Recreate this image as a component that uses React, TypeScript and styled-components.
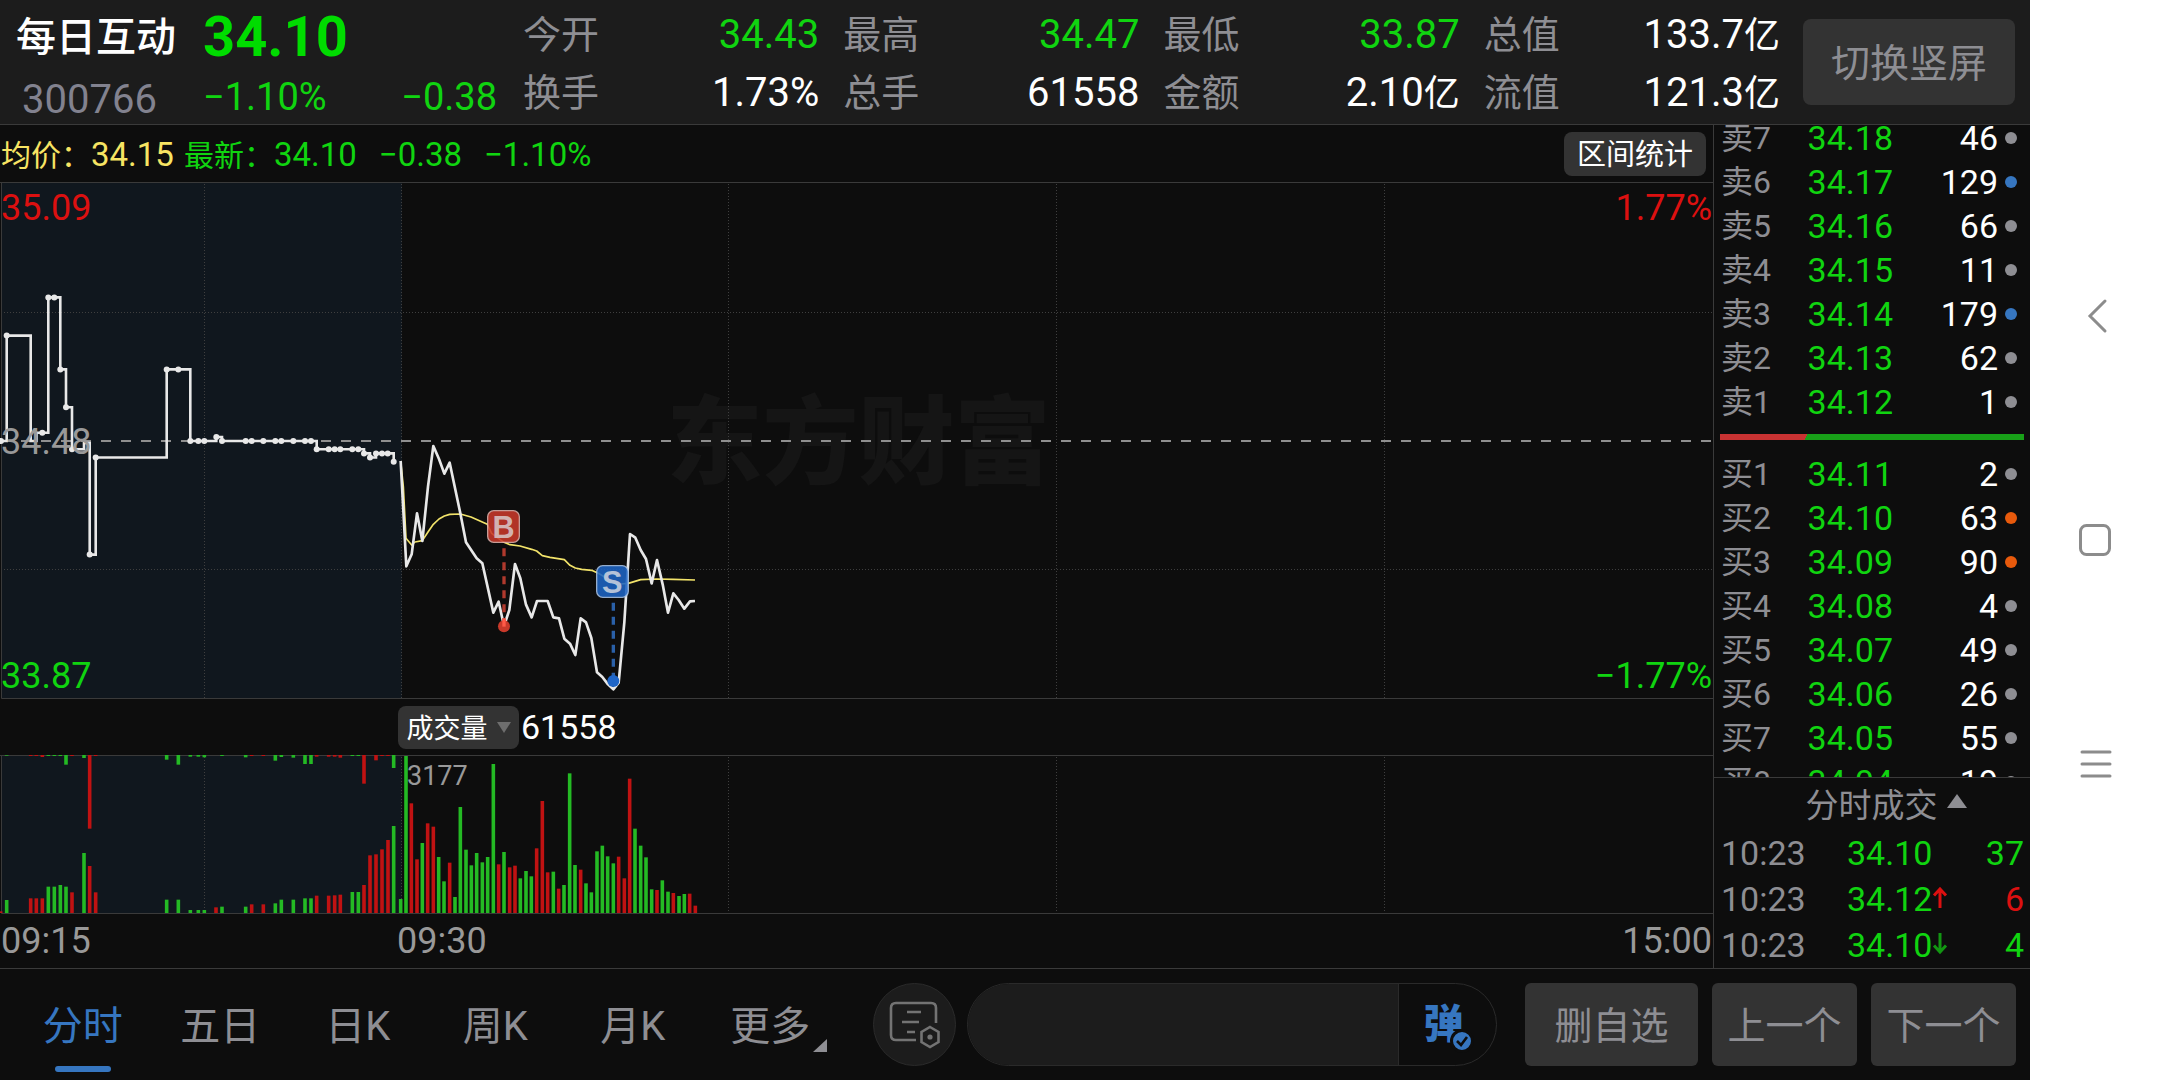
import React from "react";
import styled, { createGlobalStyle } from "styled-components";

const color = {
  page: "#0d0d0d",
  header: "#1c1c1c",
  line: "#3a3a3a",
  button: "#333333",
  muted: "#8e8e93",
  axis: "#999999",
  up: "#dc1010",
  down: "#10d410",
  downStrong: "#00dc00",
  avg: "#f7e463",
  blue: "#3676c0",
  white: "#ffffff",
};

type Tone = "up" | "down" | "white" | "muted";

const GlobalStyle = createGlobalStyle`
  *, *::before, *::after { box-sizing: border-box; }
  html, body, #root { height: 100%; }
  body {
    margin: 0;
    background: ${color.page};
    color: ${color.white};
    font-family: Roboto, "Noto Sans CJK SC", sans-serif;
    font-size: 34px;
    line-height: 1.2;
  }
  button, input { font: inherit; color: inherit; border: 0; margin: 0; padding: 0; background: none; }
  button { padding-top: 4px; white-space: nowrap; cursor: pointer; }
  table { border-collapse: collapse; }
`;

const Screen = styled.div`
  display: flex;
  min-height: 100vh;
`;

const Terminal = styled.main`
  display: flex;
  flex: 1;
  flex-direction: column;
  min-width: 0;
`;

/* ---------- header ---------- */

const Header = styled.header`
  display: flex;
  height: 125px;
  padding: 6px 15px 0 16px;
  background: ${color.header};
  border-bottom: 1px solid ${color.line};
`;

const Identity = styled.div`
  display: flex;
  flex-direction: column;
  justify-content: space-between;
  width: 187px;
`;

const StockName = styled.h1`
  margin: 0;
  font-size: 40px;
  font-weight: 500;
  line-height: 64px;
`;

const StockCode = styled.span`
  padding-left: 6px;
  color: #82828f;
  font-size: 40px;
  line-height: 48px;
`;

const Quote = styled.div`
  width: 294px;
  color: ${color.down};
`;

const LastPrice = styled.strong`
  display: block;
  color: ${color.downStrong};
  font-size: 56px;
  font-weight: 700;
  line-height: 62px;
`;

const QuoteChange = styled.div`
  display: flex;
  justify-content: space-between;
  font-size: 38px;
  line-height: 58px;
`;

const Stats = styled.dl`
  display: grid;
  flex: 1;
  grid-template-columns: repeat(4, 1fr);
  grid-auto-rows: 58px;
  column-gap: 24px;
  margin: 0 23px 0 26px;
`;

const Stat = styled.div`
  display: flex;
  align-items: center;
  justify-content: space-between;
  white-space: nowrap;
`;

const StatLabel = styled.dt`
  padding-top: 2px;
  color: ${color.muted};
  font-size: 38px;
`;

const StatValue = styled.dd<{ $tone: Tone }>`
  margin: 0;
  color: ${(p) => color[p.$tone]};
  font-size: 40px;
`;

const Unit = styled.span`
  font-size: 36px;
`;

const RotateButton = styled.button`
  width: 212px;
  height: 86px;
  margin-top: 13px;
  border-radius: 8px;
  background: ${color.button};
  color: ${color.muted};
  font-size: 39px;
`;

/* ---------- charts ---------- */

const Workspace = styled.div`
  display: flex;
  flex: 1;
`;

const Charts = styled.section`
  flex: 1;
  min-width: 0;
`;

const InfoBar = styled.div`
  display: flex;
  align-items: center;
  justify-content: space-between;
  height: 58px;
  padding-right: 7px;
  border-bottom: 1px solid ${color.line};
`;

const Legend = styled.div`
  display: flex;
  align-items: center;
  gap: 22px;
  padding: 3px 0 0 1px;
  white-space: nowrap;
`;

const LegendPair = styled.div`
  display: flex;
  gap: 10px;
`;

const LegendItem = styled.span<{ $avg?: boolean }>`
  display: flex;
  align-items: center;
  color: ${(p) => (p.$avg ? color.avg : color.down)};
  font-size: 33px;
`;

const LegendLabel = styled.span`
  padding-top: 2px;
  font-size: 30px;
`;

const RangeButton = styled.button`
  width: 142px;
  height: 44px;
  border-radius: 8px;
  background: ${color.button};
  font-size: 29px;
`;

const Plot = styled.div`
  position: relative;
  svg {
    position: relative;
    display: block;
    width: 100%;
    overflow: visible;
  }
`;

const Watermark = styled.div`
  position: absolute;
  inset: 0;
  display: flex;
  align-items: center;
  justify-content: center;
  padding: 0 0 12px 4px;
  color: #151515;
  font-family: "Noto Sans CJK SC", sans-serif;
  font-size: 96px;
  font-weight: 900;
`;

const Scale = styled.div<{ $right?: boolean }>`
  position: absolute;
  top: 4px;
  bottom: 2px;
  left: ${(p) => (p.$right ? "auto" : "1px")};
  right: ${(p) => (p.$right ? "1px" : "auto")};
  display: flex;
  flex-direction: column;
  justify-content: space-between;
  font-size: 36px;
  line-height: 42px;
  text-align: right;
`;

const ScaleMark = styled.span<{ $color: string }>`
  color: ${(p) => p.$color};
`;

const VolumeBar = styled.div`
  display: flex;
  align-items: center;
  gap: 2px;
  height: 57px;
  padding-left: 398px;
  border-bottom: 1px solid ${color.line};
`;

const IndicatorButton = styled.button`
  display: flex;
  align-items: center;
  justify-content: center;
  gap: 9px;
  width: 121px;
  height: 43px;
  border-radius: 8px;
  background: ${color.button};
  font-size: 27px;
  svg { margin-bottom: 4px; }
`;

const VolumePeak = styled.span`
  position: absolute;
  top: 2px;
  left: 407px;
  color: ${color.axis};
  font-size: 27px;
  line-height: 36px;
`;

const TimeAxis = styled.div`
  display: flex;
  align-items: center;
  height: 54px;
  padding: 2px 1px 0;
  color: ${color.axis};
  font-size: 36px;
  span:nth-child(1) { width: 396px; }
  span:nth-child(2) { flex: 1; }
`;

/* ---------- order book ---------- */

const Side = styled.aside`
  display: flex;
  flex-direction: column;
  width: 317px;
  border-left: 1px solid ${color.line};
`;

const Book = styled.div`
  flex: 1;
  contain: size;
  overflow: hidden;
`;

const BookScroll = styled.div`
  margin-top: -9px;
`;

const Levels = styled.table`
  width: 100%;
  table-layout: fixed;
  td, th {
    height: 44px;
    padding: 0;
    line-height: 44px;
    text-align: right;
    font-weight: 400;
  }
`;

const LevelName = styled.th`
  width: 70px;
  color: ${color.muted};
  font-size: 32px;
  && { padding-left: 7px; text-align: left; }
`;

const LevelPrice = styled.td`
  width: 109px;
  color: ${color.down};
`;

const LevelSize = styled.td`
  width: 105px;
`;

const LevelDot = styled.td<{ $dot: string }>`
  &::after {
    display: block;
    width: 12px;
    height: 12px;
    margin-left: 7px;
    border-radius: 50%;
    background: ${(p) => p.$dot};
    content: "";
  }
`;

const Balance = styled.div`
  height: 6px;
  margin: 10px 6px 12px;
  background: linear-gradient(115deg, #c83232 0 28.5%, #18a018 28.5%);
`;

const Trades = styled.section`
  border-top: 1px solid ${color.line};
`;

const TradesToggle = styled.button`
  display: flex;
  align-items: center;
  justify-content: center;
  gap: 9px;
  width: 100%;
  height: 52px;
  padding-left: 28px;
  color: ${color.muted};
  font-size: 33px;
  svg { margin-bottom: 10px; }
`;

const TradeTable = styled.table`
  width: 100%;
  table-layout: fixed;
  td {
    height: 46px;
    padding: 0;
    line-height: 46px;
  }
`;

const TradeTime = styled.td`
  width: 133px;
  color: ${color.muted};
  && { padding-left: 7px; }
`;

const TradePrice = styled.td`
  width: 115px;
  color: ${color.down};
  white-space: nowrap;
`;

const TradeSize = styled.td<{ $tone: Tone }>`
  color: ${(p) => color[p.$tone]};
  text-align: right;
  && { padding-right: 6px; }
`;

/* ---------- bottom bar ---------- */

const BottomBar = styled.footer`
  display: flex;
  padding: 14px;
  border-top: 1px solid ${color.line};
`;

const Tabs = styled.nav`
  display: grid;
  grid-template-columns: repeat(6, 1fr);
  width: 825px;
`;

const Tab = styled.button<{ $active?: boolean }>`
  position: relative;
  height: 83px;
  color: ${(p) => (p.$active ? color.blue : color.muted)};
  font-size: 40px;
  &::after {
    position: absolute;
    bottom: -6px;
    left: calc(50% - 28px);
    display: ${(p) => (p.$active ? "block" : "none")};
    width: 56px;
    height: 6px;
    border-radius: 3px;
    background: ${color.blue};
    content: "";
  }
`;

const Corner = styled.svg`
  position: absolute;
  right: 12px;
  bottom: 14px;
`;

const NoteButton = styled.button`
  display: flex;
  align-items: center;
  justify-content: center;
  width: 83px;
  height: 83px;
  margin: 0 11px 0 34px;
  padding: 0;
  border: 1px solid #2a2a2a;
  border-radius: 50%;
  background: ${color.header};
`;

const Comment = styled.div`
  display: flex;
  flex: 1;
  min-width: 0;
  margin-right: 28px;
  overflow: hidden;
  border: 1px solid #2a2a2a;
  border-radius: 42px;
`;

const CommentInput = styled.input`
  flex: 1;
  min-width: 0;
  padding: 0 36px;
  background: ${color.header};
  font-size: 34px;
  outline: 0;
`;

const BulletButton = styled.button`
  position: relative;
  width: 98px;
  padding: 0 8px 8px 0;
  border-left: 1px solid #2a2a2a;
  color: ${color.blue};
  font-family: "Noto Sans CJK SC", sans-serif;
  font-size: 40px;
  font-weight: 900;
  svg {
    position: absolute;
    top: 45px;
    left: 51px;
  }
`;

const Actions = styled.div`
  display: flex;
  gap: 14px;
`;

const ActionButton = styled.button<{ $wide?: boolean }>`
  width: ${(p) => (p.$wide ? 173 : 145)}px;
  border-radius: 6px;
  background: ${color.button};
  color: ${color.muted};
  font-size: 38px;
`;

/* ---------- system navigation ---------- */

const SystemNav = styled.nav`
  display: flex;
  flex-direction: column;
  align-items: center;
  justify-content: center;
  gap: 184px;
  width: 130px;
  background: #ffffff;
`;

const NavButton = styled.button`
  display: flex;
  height: 40px;
  padding: 0;
  svg { display: block; }
`;

/* ---------- data ---------- */

const stats: { label: string; value: string; unit?: string; tone: Tone }[] = [
  { label: "今开", value: "34.43", tone: "down" },
  { label: "最高", value: "34.47", tone: "down" },
  { label: "最低", value: "33.87", tone: "down" },
  { label: "总值", value: "133.7", unit: "亿", tone: "white" },
  { label: "换手", value: "1.73%", tone: "white" },
  { label: "总手", value: "61558", tone: "white" },
  { label: "金额", value: "2.10", unit: "亿", tone: "white" },
  { label: "流值", value: "121.3", unit: "亿", tone: "white" },
];

const GREY = "#8e8e93";
const BLUE = "#3676c0";
const ORANGE = "#e85a0c";

type Level = [string, string, number, string];

const asks: Level[] = [
  ["卖7", "34.18", 46, GREY],
  ["卖6", "34.17", 129, BLUE],
  ["卖5", "34.16", 66, GREY],
  ["卖4", "34.15", 11, GREY],
  ["卖3", "34.14", 179, BLUE],
  ["卖2", "34.13", 62, GREY],
  ["卖1", "34.12", 1, GREY],
];

const bids: Level[] = [
  ["买1", "34.11", 2, GREY],
  ["买2", "34.10", 63, ORANGE],
  ["买3", "34.09", 90, ORANGE],
  ["买4", "34.08", 4, GREY],
  ["买5", "34.07", 49, GREY],
  ["买6", "34.06", 26, GREY],
  ["买7", "34.05", 55, GREY],
  ["买8", "34.04", 19, GREY],
];

const trades: { time: string; price: string; size: number; tone: Tone; dir?: "up" | "down" }[] = [
  { time: "10:23", price: "34.10", size: 37, tone: "down" },
  { time: "10:23", price: "34.12", size: 6, tone: "up", dir: "up" },
  { time: "10:23", price: "34.10", size: 4, tone: "down", dir: "down" },
];

const gridX = [204.5, 401.5, 728.5, 1056.5, 1384.5];

const auctionPath =
  "M0 258H6.7V152.6H30.7V258H36.5V249.7H48.3V114.4H60.3V186.4H66V224.3H72V266.3H84V260H89.7V371.6H95.7V274.5H166.7V186.4H190.3V258H216.3V254H222V258H316.7V266.3H364V270.4H370V274.5H376V270.4H393.7V278.7";

const auctionDots: [number, number[]][] = [
  [258, [1, 190.3, 198.3, 204.3, 222, 245.7, 251.7, 263.3, 275.3, 281.3, 293.3, 305, 311]],
  [152.6, [6.7]],
  [249.7, [42.3]],
  [114.4, [48.3, 54.3]],
  [186.4, [60.3, 166.7, 178.3]],
  [224.3, [66]],
  [266.3, [72, 316.7, 328.7, 334.7, 340.3, 352.3, 358.3]],
  [371.6, [89.7]],
  [274.5, [95.7, 370]],
  [254, [216.3]],
  [270.4, [364, 376, 382, 387.7]],
  [278.7, [393.7]],
];

/* Intraday traces, three plot steps per pixel. */
const priceTrace =
  "62,183 79,499 95,463 111,340 127,423 144,260 160,138 177,177 193,221 209,188 241,340 258,427 290,475 307,490 340,638 356,605 372,678 388,630 405,492 421,535 438,614 455,652 471,603 503,603 520,652 537,655 553,716 570,731 586,765 602,655 618,667 634,714 651,817 667,831 684,853 700,868 716,848 733,667 750,402 766,413 782,450 798,477 815,550 831,480 848,553 864,638 880,580 896,600 913,626 930,604 945,603";
const avgTrace =
  "62,183 70,260 78,415 95,435 105,426 127,422 144,396 160,373 177,357 193,348 209,343 241,342 273,351 300,363 322,373 335,400 355,415 372,427 390,434 420,438 455,448 470,453 487,467 510,472 553,479 570,496 586,504 605,508 635,511 655,520 680,535 700,545 720,552 745,550 782,539 830,537 880,538 945,540";

type Bar = [number, number, "g" | "r"];

const BASE = 669;
const TOP = 195;

const volumeBars: Bar[] = [
  [2, 664, "r"], [20, 630, "g"], [92, 625, "r"], [109, 625, "r"], [127, 625, "r"], [145, 590, "g"], [163, 590, "g"],
  [181, 585, "g"], [198, 590, "g"], [216, 607, "r"], [252, 489, "g"], [269, 528, "r"], [287, 607, "r"],
  [500, 629, "g"], [535, 629, "g"], [571, 660, "g"], [595, 660, "g"], [613, 660, "g"], [648, 652, "r"],
  [666, 650, "g"], [737, 650, "g"], [755, 643, "r"], [790, 643, "r"], [826, 640, "g"], [844, 629, "g"],
  [880, 629, "g"], [915, 625, "g"], [933, 625, "g"], [950, 617, "r"], [986, 617, "r"], [1004, 616, "r"],
  [1021, 614, "r"], [1057, 606, "g"], [1075, 606, "g"], [1092, 585, "r"], [1110, 496, "r"], [1128, 493, "r"],
  [1146, 478, "r"], [1164, 450, "r"], [1181, 408, "g"], [1202, 627, "g"], [1218, 198, "g"], [1234, 340, "r"],
  [1251, 508, "r"], [1267, 459, "g"], [1283, 400, "r"], [1300, 410, "r"], [1316, 501, "g"], [1332, 574, "g"],
  [1349, 518, "r"], [1365, 621, "g"], [1381, 351, "g"], [1398, 479, "g"], [1414, 526, "g"], [1430, 489, "g"],
  [1447, 517, "g"], [1463, 501, "g"], [1480, 222, "g"], [1496, 523, "r"], [1512, 486, "g"], [1529, 532, "r"],
  [1545, 527, "r"], [1561, 565, "g"], [1578, 543, "g"], [1594, 559, "g"], [1610, 475, "r"], [1627, 333, "r"],
  [1643, 547, "r"], [1660, 545, "g"], [1676, 596, "r"], [1692, 585, "g"], [1709, 250, "g"], [1725, 525, "g"],
  [1742, 539, "r"], [1758, 580, "g"], [1774, 607, "g"], [1791, 484, "g"], [1807, 467, "g"], [1823, 499, "g"],
  [1840, 520, "g"], [1856, 500, "r"], [1873, 565, "r"], [1889, 266, "r"], [1905, 416, "g"], [1922, 467, "g"],
  [1938, 502, "g"], [1955, 598, "g"], [1971, 600, "r"], [1987, 571, "g"], [2004, 605, "g"], [2020, 609, "r"],
  [2037, 618, "g"], [2053, 612, "g"], [2069, 611, "r"], [2086, 647, "r"],
];

const unmatchedBars: Bar[] = [
  [20, 197, "g"], [92, 198, "r"], [109, 198, "r"], [127, 201, "r"], [145, 198, "g"], [163, 198, "g"],
  [181, 198, "g"], [198, 224, "g"], [216, 198, "r"], [252, 204, "g"], [269, 416, "r"], [287, 198, "r"],
  [500, 209, "g"], [535, 224, "g"], [571, 200, "g"], [595, 200, "g"], [613, 202, "g"], [666, 198, "g"],
  [737, 202, "g"], [755, 198, "r"], [790, 198, "r"], [826, 212, "g"], [844, 201, "g"], [880, 203, "g"],
  [915, 222, "g"], [933, 222, "g"], [950, 200, "r"], [986, 200, "r"], [1004, 200, "r"], [1021, 203, "r"],
  [1057, 198, "g"], [1075, 198, "g"], [1092, 281, "r"], [1128, 211, "r"], [1146, 198, "r"], [1164, 198, "r"],
  [1181, 234, "g"],
];

const barFill = { g: "#24ba24", r: "#c01212" };

/* ---------- drawings ---------- */

function PriceChart() {
  return (
    <svg height="516" viewBox="0 0 1713 516" preserveAspectRatio="none" aria-hidden="true">
      <rect x="2" y="0" width="400" height="515" fill="#10171e" />
      <g stroke="#3f3f3f" strokeDasharray="1 2">
        {gridX.map((x) => (
          <line key={x} x1={x} x2={x} y1="1" y2="515" />
        ))}
        <line x1="4" x2="1713" y1="129.5" y2="129.5" />
        <line x1="4" x2="1713" y1="386.5" y2="386.5" />
      </g>
      <path d="M1.5 0V515.5H1713" fill="none" stroke={color.line} />
      <line x1="1" x2="1713" y1="258" y2="258" stroke="#8f8f8f" strokeWidth="2" strokeDasharray="10 10" />
      <path d={auctionPath} fill="none" stroke="#e8e8e8" strokeWidth="2.6" />
      {auctionDots.map(([y, xs]) => xs.map((x) => <circle key={`${x}-${y}`} cx={x} cy={y} r="3" fill="#e8e8e8" />))}
      <g transform="translate(380 217) scale(0.33333)" fill="none" strokeLinejoin="round">
        <polyline points={avgTrace} stroke="#f2e36a" strokeWidth="5" />
        <polyline points={priceTrace} stroke="#e8e8e8" strokeWidth="8" />
        <line x1="372" x2="372" y1="445" y2="670" stroke="#b0392d" strokeWidth="10" strokeDasharray="24 18" />
        <circle cx="372" cy="679" r="18" fill="#c8392a" />
        <line x1="372" x2="372" y1="655" y2="680" stroke="#ff5a48" strokeWidth="10" />
        <line x1="700" x2="700" y1="608" y2="830" stroke="#2a60a8" strokeWidth="10" strokeDasharray="24 18" />
        <circle cx="700" cy="843" r="18" fill="#1f66c8" />
        <g opacity="0.88" strokeWidth="4">
          <rect x="323" y="332" width="95" height="95" rx="18" fill="#c8392a" stroke="#e0b0aa" />
          <rect x="650" y="497" width="95" height="95" rx="18" fill="#1d64c4" stroke="#a8c4e8" />
        </g>
        <g fontFamily="Liberation Sans, sans-serif" fontWeight="700" fontSize="92" textAnchor="middle">
          <text x="371" y="413" fill="#d2b2b0">B</text>
          <text x="697" y="578" fill="#b4c2d8">S</text>
        </g>
      </g>
    </svg>
  );
}

function VolumeChart() {
  return (
    <svg height="158" viewBox="0 0 1713 158" preserveAspectRatio="none" aria-hidden="true">
      <rect x="2" y="0" width="400" height="157" fill="#10171e" />
      <g stroke="#3f3f3f" strokeDasharray="1 2">
        {gridX.map((x) => (
          <line key={x} x1={x} x2={x} y1="1" y2="157" />
        ))}
      </g>
      <path d="M1.5 0V157.5H1713" fill="none" stroke={color.line} />
      {volumeBars.map(([x, top, c]) => (
        <rect key={x} x={x / 3 - 1.8} y={157 - (BASE - top) / 3} width="3.6" height={(BASE - top) / 3} fill={barFill[c]} />
      ))}
      {unmatchedBars.map(([x, bottom, c]) => (
        <rect key={x} x={x / 3 - 1.8} y="-1" width="3.6" height={(bottom - TOP) / 3} fill={barFill[c]} />
      ))}
    </svg>
  );
}

function LevelTable({ rows, label }: { rows: Level[]; label: string }) {
  return (
    <Levels aria-label={label}>
      <tbody>
        {rows.map(([name, price, size, dot]) => (
          <tr key={name}>
            <LevelName scope="row">{name}</LevelName>
            <LevelPrice>{price}</LevelPrice>
            <LevelSize>{size}</LevelSize>
            <LevelDot $dot={dot} />
          </tr>
        ))}
      </tbody>
    </Levels>
  );
}

function DirectionArrow({ dir }: { dir: "up" | "down" }) {
  return (
    <svg width="16" height="24" viewBox="0 0 16 24" fill="none" strokeWidth="3" stroke={dir === "up" ? color.up : "#129612"}>
      <path d={dir === "up" ? "M8 21V2M2 8.500L8 2L14 8.500" : "M8 0V19M2 12.500L8 19L14 12.500"} />
    </svg>
  );
}

export default function App() {
  return (
    <Screen>
      <GlobalStyle />
      <Terminal>
        <Header>
          <Identity>
            <StockName>每日互动</StockName>
            <StockCode>300766</StockCode>
          </Identity>
          <Quote>
            <LastPrice>34.10</LastPrice>
            <QuoteChange>
              <span>−1.10%</span>
              <span>−0.38</span>
            </QuoteChange>
          </Quote>
          <Stats>
            {stats.map((s) => (
              <Stat key={s.label}>
                <StatLabel>{s.label}</StatLabel>
                <StatValue $tone={s.tone}>
                  {s.value}
                  {s.unit && <Unit>{s.unit}</Unit>}
                </StatValue>
              </Stat>
            ))}
          </Stats>
          <RotateButton type="button">切换竖屏</RotateButton>
        </Header>

        <Workspace>
          <Charts>
            <InfoBar>
              <Legend>
                <LegendPair>
                  <LegendItem $avg>
                    <LegendLabel>均价：</LegendLabel>34.15
                  </LegendItem>
                  <LegendItem>
                    <LegendLabel>最新：</LegendLabel>34.10
                  </LegendItem>
                </LegendPair>
                <LegendItem>−0.38</LegendItem>
                <LegendItem>−1.10%</LegendItem>
              </Legend>
              <RangeButton type="button">区间统计</RangeButton>
            </InfoBar>
            <Plot>
              <Watermark>东方财富</Watermark>
              <PriceChart />
              <Scale>
                <ScaleMark $color={color.up}>35.09</ScaleMark>
                <ScaleMark $color={color.axis}>34.48</ScaleMark>
                <ScaleMark $color={color.down}>33.87</ScaleMark>
              </Scale>
              <Scale $right>
                <ScaleMark $color={color.up}>1.77%</ScaleMark>
                <ScaleMark $color={color.down}>−1.77%</ScaleMark>
              </Scale>
            </Plot>
            <VolumeBar>
              <IndicatorButton type="button">
                成交量
                <svg width="14" height="11" viewBox="0 0 14 11">
                  <path d="M0 0H14L7 11Z" fill="#6e6e6e" />
                </svg>
              </IndicatorButton>
              <span>61558</span>
            </VolumeBar>
            <Plot>
              <VolumeChart />
              <VolumePeak>3177</VolumePeak>
            </Plot>
            <TimeAxis>
              <span>09:15</span>
              <span>09:30</span>
              <span>15:00</span>
            </TimeAxis>
          </Charts>

          <Side>
            <Book>
              <BookScroll>
                <LevelTable rows={asks} label="卖盘" />
                <Balance />
                <LevelTable rows={bids} label="买盘" />
              </BookScroll>
            </Book>
            <Trades>
              <TradesToggle type="button">
                分时成交
                <svg width="20" height="14" viewBox="0 0 20 14">
                  <path d="M10 0L20 14H0Z" fill={color.muted} />
                </svg>
              </TradesToggle>
              <TradeTable>
                <tbody>
                  {trades.map((t, i) => (
                    <tr key={i}>
                      <TradeTime>{t.time}</TradeTime>
                      <TradePrice>
                        {t.price}
                        {t.dir && <DirectionArrow dir={t.dir} />}
                      </TradePrice>
                      <TradeSize $tone={t.tone}>{t.size}</TradeSize>
                    </tr>
                  ))}
                </tbody>
              </TradeTable>
            </Trades>
          </Side>
        </Workspace>

        <BottomBar>
          <Tabs>
            <Tab type="button" $active>分时</Tab>
            <Tab type="button">五日</Tab>
            <Tab type="button">日K</Tab>
            <Tab type="button">周K</Tab>
            <Tab type="button">月K</Tab>
            <Tab type="button">
              更多
              <Corner width="14" height="13" viewBox="0 0 14 13">
                <path d="M14 0V13H0Z" fill={color.muted} />
              </Corner>
            </Tab>
          </Tabs>
          <NoteButton type="button" aria-label="笔记">
            <svg width="52" height="48" viewBox="0 0 52 48" fill="none" stroke="#737373" strokeWidth="2.6">
              <path d="M27 39H7Q2 39 2 34V7Q2 2 7 2H42Q47 2 47 7V22" />
              <path d="M18 11H32M13 21H30M18 31H26" />
              <path d="M41 26L49.500 31V41L41 46L32.500 41V31Z" />
              <circle cx="41" cy="36" r="2.600" fill="#737373" stroke="none" />
            </svg>
          </NoteButton>
          <Comment>
            <CommentInput type="text" aria-label="评论" />
            <BulletButton type="button">
              弹
              <svg width="24" height="24" viewBox="0 0 24 24">
                <circle cx="12" cy="12" r="10.500" fill={color.blue} stroke={color.page} strokeWidth="3" />
                <path d="M7 12L11 16L17 8" fill="none" stroke={color.page} strokeWidth="2.600" />
              </svg>
            </BulletButton>
          </Comment>
          <Actions>
            <ActionButton type="button" $wide>删自选</ActionButton>
            <ActionButton type="button">上一个</ActionButton>
            <ActionButton type="button">下一个</ActionButton>
          </Actions>
        </BottomBar>
      </Terminal>

      <SystemNav>
        <NavButton type="button" aria-label="返回">
          <svg width="40" height="40" viewBox="0 0 40 40" fill="none" stroke="#8c8c8c" strokeWidth="3" strokeLinecap="round">
            <path d="M30 5L15 20L30 35" />
          </svg>
        </NavButton>
        <NavButton type="button" aria-label="主屏幕">
          <svg width="40" height="40" viewBox="0 0 40 40" fill="none" stroke="#8c8c8c" strokeWidth="3">
            <rect x="5.500" y="5.500" width="29" height="29" rx="6" />
          </svg>
        </NavButton>
        <NavButton type="button" aria-label="菜单">
          <svg width="40" height="40" viewBox="0 0 40 40" fill="none" stroke="#8c8c8c" strokeWidth="3" strokeLinecap="round">
            <path d="M7 8H35M7 20H35M7 32H35" />
          </svg>
        </NavButton>
      </SystemNav>
    </Screen>
  );
}
